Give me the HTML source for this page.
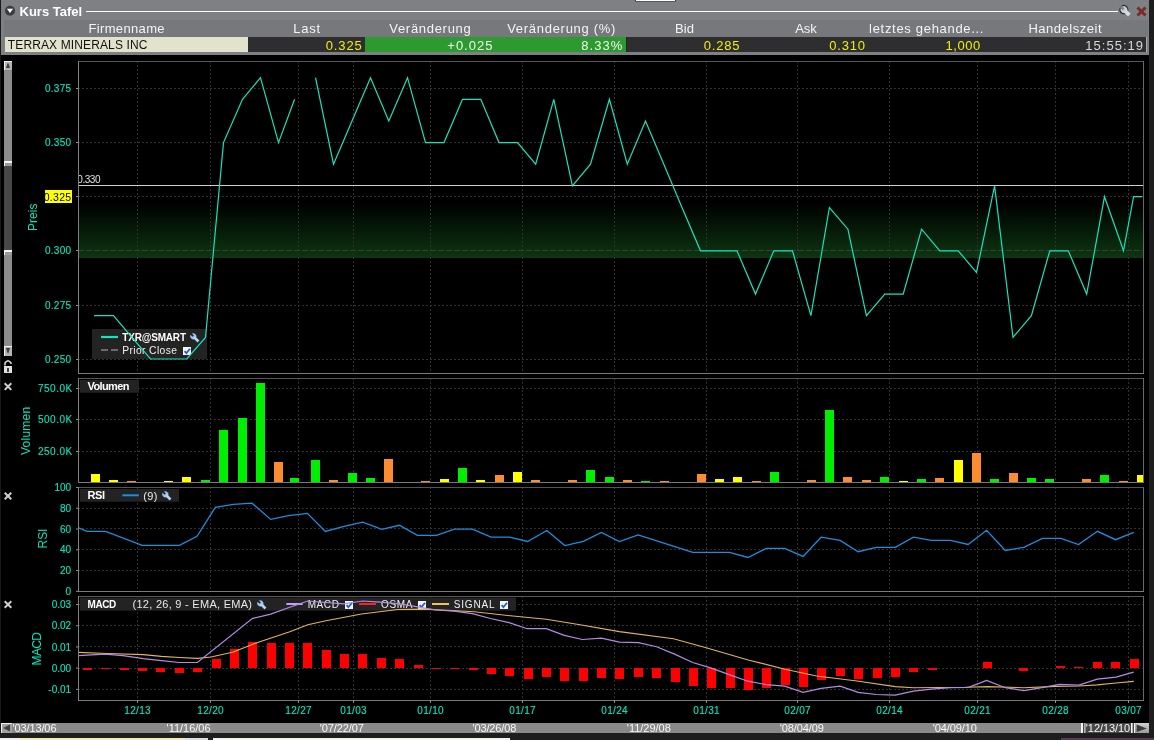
<!DOCTYPE html><html><head><meta charset="utf-8"><style>html,body{margin:0;padding:0;background:#000;overflow:hidden}svg{display:block;will-change:transform}text{font-family:'Liberation Sans', sans-serif}</style></head><body>
<svg width="1154" height="740" viewBox="0 0 1154 740">
<rect x="0" y="0" width="1154" height="740" fill="#000" />
<rect x="0" y="0" width="1154" height="55" fill="#7f8083" />
<rect x="4" y="20" width="1144" height="17" fill="#77787b" />
<rect x="0" y="0" width="1" height="740" fill="#1a1a1a" />
<rect x="1149" y="0" width="5" height="740" fill="#1e1e1e" />
<circle cx="10" cy="10.8" r="5" fill="#3c3c3e"/>
<path d="M6.9 8.8 L13.1 8.8 L10 13 Z" fill="#fff"/>
<text x="19.5" y="15.6" font-size="13" fill="#fff" font-weight="bold" text-anchor="start" textLength="62.7" lengthAdjust="spacing" >Kurs Tafel</text>
<rect x="635" y="0" width="41" height="1.6" fill="#3a3a3a" />
<rect x="636" y="0" width="39" height="1" fill="#ffffff" />
<rect x="86" y="11" width="1032" height="1" fill="#ffffff" />
<g transform="translate(1125,10.8) rotate(-45)"><circle cx="0" cy="-1.6" r="4" fill="#c6ccd4" stroke="#1e1e1e" stroke-width="1.1"/><rect x="-1.9" y="0" width="3.8" height="6.2" fill="#d6dce2"/><rect x="-1.3" y="-6.2" width="2.6" height="4" fill="#7f8083"/></g>
<path d="M1137.5 7.5 L1145.5 15.5 M1145.5 7.5 L1137.5 15.5" stroke="#7a2a2a" stroke-width="3"/>
<text x="126.5" y="32.8" font-size="13" fill="#f4f4f4" font-weight="normal" text-anchor="middle" textLength="76.2" lengthAdjust="spacing" >Firmenname</text>
<text x="306.7" y="32.8" font-size="13" fill="#f4f4f4" font-weight="normal" text-anchor="middle" textLength="26.8" lengthAdjust="spacing" >Last</text>
<text x="430" y="32.8" font-size="13" fill="#f4f4f4" font-weight="normal" text-anchor="middle" textLength="81.5" lengthAdjust="spacing" >Veränderung</text>
<text x="561.3" y="32.8" font-size="13" fill="#f4f4f4" font-weight="normal" text-anchor="middle" textLength="108.3" lengthAdjust="spacing" >Veränderung (%)</text>
<text x="684.5" y="32.8" font-size="13" fill="#f4f4f4" font-weight="normal" text-anchor="middle" textLength="18.9" lengthAdjust="spacing" >Bid</text>
<text x="806" y="32.8" font-size="13" fill="#f4f4f4" font-weight="normal" text-anchor="middle" textLength="21.7" lengthAdjust="spacing" >Ask</text>
<text x="926.3" y="32.8" font-size="13" fill="#f4f4f4" font-weight="normal" text-anchor="middle" textLength="114.4" lengthAdjust="spacing" >letztes gehande...</text>
<text x="1065" y="32.8" font-size="13" fill="#f4f4f4" font-weight="normal" text-anchor="middle" textLength="73.1" lengthAdjust="spacing" >Handelszeit</text>
<rect x="5" y="37" width="243" height="15" fill="#e3e3cd" />
<rect x="248" y="37" width="117" height="15" fill="#2e2e30" />
<rect x="365" y="37" width="261" height="15" fill="#2c9a30" />
<rect x="626" y="37" width="520" height="15" fill="#2e2e30" />
<rect x="626" y="37" width="1" height="15" fill="#242426" />
<rect x="1146" y="37" width="1" height="15" fill="#a8a8a8" />
<text x="7.8" y="49.1" font-size="12" fill="#101010" font-weight="normal" text-anchor="start" textLength="139.6" lengthAdjust="spacing" >TERRAX MINERALS INC</text>
<text x="361.7" y="50.2" font-size="13" fill="#f0f000" font-weight="normal" text-anchor="end" textLength="35.9" lengthAdjust="spacing" >0.325</text>
<text x="492.4" y="50.2" font-size="13" fill="#f2f8ec" font-weight="normal" text-anchor="end" textLength="45.1" lengthAdjust="spacing" >+0.025</text>
<text x="622.4" y="50.2" font-size="13" fill="#f2f8ec" font-weight="normal" text-anchor="end" textLength="41.1" lengthAdjust="spacing" >8.33%</text>
<text x="739.4" y="50.2" font-size="13" fill="#f0f000" font-weight="normal" text-anchor="end" textLength="35.7" lengthAdjust="spacing" >0.285</text>
<text x="865" y="50.2" font-size="13" fill="#f0f000" font-weight="normal" text-anchor="end" textLength="35.7" lengthAdjust="spacing" >0.310</text>
<text x="980.2" y="50.2" font-size="13" fill="#f0f000" font-weight="normal" text-anchor="end" textLength="34.6" lengthAdjust="spacing" >1,000</text>
<text x="1143" y="50.2" font-size="13" fill="#d8d8d8" font-weight="normal" text-anchor="end" textLength="57.7" lengthAdjust="spacing" >15:55:19</text>
<defs><linearGradient id="gb" x1="0" y1="0" x2="0" y2="1"><stop offset="0" stop-color="#0b3410" stop-opacity="0"/><stop offset="1" stop-color="#0d3611" stop-opacity="1"/></linearGradient></defs>
<rect x="78" y="203" width="1065" height="55" fill="url(#gb)" />
<line x1="137.5" y1="61" x2="137.5" y2="373" stroke="#313131" stroke-width="1" stroke-dasharray="2 2"/>
<line x1="210.5" y1="61" x2="210.5" y2="373" stroke="#313131" stroke-width="1" stroke-dasharray="2 2"/>
<line x1="298.5" y1="61" x2="298.5" y2="373" stroke="#313131" stroke-width="1" stroke-dasharray="2 2"/>
<line x1="353.5" y1="61" x2="353.5" y2="373" stroke="#313131" stroke-width="1" stroke-dasharray="2 2"/>
<line x1="430.5" y1="61" x2="430.5" y2="373" stroke="#313131" stroke-width="1" stroke-dasharray="2 2"/>
<line x1="522.5" y1="61" x2="522.5" y2="373" stroke="#313131" stroke-width="1" stroke-dasharray="2 2"/>
<line x1="614.5" y1="61" x2="614.5" y2="373" stroke="#313131" stroke-width="1" stroke-dasharray="2 2"/>
<line x1="706.5" y1="61" x2="706.5" y2="373" stroke="#313131" stroke-width="1" stroke-dasharray="2 2"/>
<line x1="797.5" y1="61" x2="797.5" y2="373" stroke="#313131" stroke-width="1" stroke-dasharray="2 2"/>
<line x1="889.5" y1="61" x2="889.5" y2="373" stroke="#313131" stroke-width="1" stroke-dasharray="2 2"/>
<line x1="977.5" y1="61" x2="977.5" y2="373" stroke="#313131" stroke-width="1" stroke-dasharray="2 2"/>
<line x1="1055.5" y1="61" x2="1055.5" y2="373" stroke="#313131" stroke-width="1" stroke-dasharray="2 2"/>
<line x1="1128.5" y1="61" x2="1128.5" y2="373" stroke="#313131" stroke-width="1" stroke-dasharray="2 2"/>
<line x1="78" y1="88.5" x2="1143" y2="88.5" stroke="#313131" stroke-width="1" stroke-dasharray="2 2"/>
<line x1="78" y1="142.5" x2="1143" y2="142.5" stroke="#313131" stroke-width="1" stroke-dasharray="2 2"/>
<line x1="78" y1="196.5" x2="1143" y2="196.5" stroke="#313131" stroke-width="1" stroke-dasharray="2 2"/>
<line x1="78" y1="250.5" x2="1143" y2="250.5" stroke="#313131" stroke-width="1" stroke-dasharray="2 2"/>
<line x1="78" y1="305.5" x2="1143" y2="305.5" stroke="#313131" stroke-width="1" stroke-dasharray="2 2"/>
<line x1="78" y1="359.5" x2="1143" y2="359.5" stroke="#313131" stroke-width="1" stroke-dasharray="2 2"/>
<line x1="78" y1="250.5" x2="1143" y2="250.5" stroke="#3c3c3c" stroke-width="1" stroke-dasharray="6 2"/>
<line x1="78" y1="185.5" x2="1143" y2="185.5" stroke="#cfcfcf" stroke-width="1" />
<clipPath id="c330"><rect x="78" y="170" width="40" height="20"/></clipPath>
<g clip-path="url(#c330)">
<text x="77.3" y="183.2" font-size="10" fill="#e0e0e0" font-weight="normal" text-anchor="start" textLength="23.2" lengthAdjust="spacing" >0.330</text>
</g>
<text x="71.1" y="92.1" font-size="10" fill="#00e8c0" font-weight="normal" text-anchor="end" textLength="26.2" lengthAdjust="spacing" stroke="#00e8c0" stroke-width="0.12" >0.375</text>
<line x1="76" y1="88.5" x2="78" y2="88.5" stroke="#909090" stroke-width="1" />
<text x="71.1" y="146.1" font-size="10" fill="#00e8c0" font-weight="normal" text-anchor="end" textLength="26.2" lengthAdjust="spacing" stroke="#00e8c0" stroke-width="0.12" >0.350</text>
<line x1="76" y1="142.5" x2="78" y2="142.5" stroke="#909090" stroke-width="1" />
<text x="71.1" y="254.1" font-size="10" fill="#00e8c0" font-weight="normal" text-anchor="end" textLength="26.2" lengthAdjust="spacing" stroke="#00e8c0" stroke-width="0.12" >0.300</text>
<line x1="76" y1="250.5" x2="78" y2="250.5" stroke="#909090" stroke-width="1" />
<text x="71.1" y="309.1" font-size="10" fill="#00e8c0" font-weight="normal" text-anchor="end" textLength="26.2" lengthAdjust="spacing" stroke="#00e8c0" stroke-width="0.12" >0.275</text>
<line x1="76" y1="305.5" x2="78" y2="305.5" stroke="#909090" stroke-width="1" />
<text x="71.1" y="363.1" font-size="10" fill="#00e8c0" font-weight="normal" text-anchor="end" textLength="26.2" lengthAdjust="spacing" stroke="#00e8c0" stroke-width="0.12" >0.250</text>
<line x1="76" y1="359.5" x2="78" y2="359.5" stroke="#909090" stroke-width="1" />
<rect x="45" y="190" width="27" height="13" fill="#ffff00" />
<text x="71.2" y="201.2" font-size="10.5" fill="#000" font-weight="normal" text-anchor="end" textLength="27.5" lengthAdjust="spacing" >0.325</text>
<line x1="76" y1="196.5" x2="78" y2="196.5" stroke="#909090" stroke-width="1" />
<text transform="translate(37.3,231) rotate(-90)" font-size="12" fill="#00e8c0" textLength="27.4" lengthAdjust="spacing">Preis</text>
<rect x="92" y="329" width="115" height="30" fill="#232323" />
<line x1="101" y1="337" x2="118" y2="337" stroke="#19e3bc" stroke-width="2.2" />
<text x="122.3" y="340.6" font-size="10" fill="#fff" font-weight="bold" text-anchor="start" textLength="63.7" lengthAdjust="spacing" >TXR@SMART</text>
<line x1="101" y1="350" x2="118" y2="350" stroke="#6a6a6a" stroke-width="2" stroke-dasharray="7 3"/>
<text x="122.3" y="353.9" font-size="10.3" fill="#f0f0f0" font-weight="normal" text-anchor="start" textLength="54.6" lengthAdjust="spacing" >Prior Close</text>
<g transform="translate(194.6,337.6) rotate(-45)"><circle cx="0" cy="-1.8" r="3" fill="#9cc4ec"/><rect x="-1.3" y="-0.5" width="2.6" height="6" fill="#b4d6f6"/><rect x="-0.95" y="-5.2" width="1.9" height="3.2" fill="#232323"/></g>
<rect x="183" y="347" width="8" height="8" fill="#f4f6fa" />
<path d="M184.6 351.2 L186.4 353.2 L190 348.8" stroke="#1d5fd0" stroke-width="1.8" fill="none"/>
<polyline points="94.1,315.7 113.5,315.7 131.9,337.4 150.5,359.0 168.8,359.0 186.8,359.0 205.5,337.4 223.5,142.6 242.5,99.3 260.5,77.7 278.5,142.6 294.6,99.3" fill="none" stroke="#19e3bc" stroke-width="1.2" stroke-linejoin="miter"/>
<polyline points="315.5,77.7 333.5,164.2 352.0,121.0 370.5,77.7 388.8,121.0 407.5,77.7 425.5,142.6 444.0,142.6 462.5,99.3 480.8,99.3 499.0,142.6 517.5,142.6 535.7,164.2 553.8,99.3 572.4,185.9 590.5,164.2 609.4,99.3 627.3,164.2 645.5,121.0 663.8,164.2 682.0,207.5 700.5,250.8 718.8,250.8 737.0,250.8 755.5,294.1 773.8,250.8 792.5,250.8 810.9,315.7 829.4,207.5 847.9,229.2 866.4,315.7 884.8,294.1 903.2,294.1 921.6,229.2 939.8,250.8 958.2,250.8 976.5,272.4 994.6,185.9 1013.0,337.4 1031.4,315.7 1049.8,250.8 1068.3,250.8 1086.7,294.1 1104.5,196.7 1123.5,250.8 1133.6,196.7 1142.3,196.7" fill="none" stroke="#19e3bc" stroke-width="1.2" stroke-linejoin="miter"/>
<rect x="78" y="61" width="1066" height="1" fill="#555555" />
<rect x="1143" y="61" width="1" height="313" fill="#686868" />
<rect x="78" y="373" width="1066" height="1" fill="#7a7a7a" />
<rect x="78" y="61" width="1" height="313" fill="#808080" />
<line x1="137.5" y1="378" x2="137.5" y2="482" stroke="#313131" stroke-width="1" stroke-dasharray="2 2"/>
<line x1="210.5" y1="378" x2="210.5" y2="482" stroke="#313131" stroke-width="1" stroke-dasharray="2 2"/>
<line x1="298.5" y1="378" x2="298.5" y2="482" stroke="#313131" stroke-width="1" stroke-dasharray="2 2"/>
<line x1="353.5" y1="378" x2="353.5" y2="482" stroke="#313131" stroke-width="1" stroke-dasharray="2 2"/>
<line x1="430.5" y1="378" x2="430.5" y2="482" stroke="#313131" stroke-width="1" stroke-dasharray="2 2"/>
<line x1="522.5" y1="378" x2="522.5" y2="482" stroke="#313131" stroke-width="1" stroke-dasharray="2 2"/>
<line x1="614.5" y1="378" x2="614.5" y2="482" stroke="#313131" stroke-width="1" stroke-dasharray="2 2"/>
<line x1="706.5" y1="378" x2="706.5" y2="482" stroke="#313131" stroke-width="1" stroke-dasharray="2 2"/>
<line x1="797.5" y1="378" x2="797.5" y2="482" stroke="#313131" stroke-width="1" stroke-dasharray="2 2"/>
<line x1="889.5" y1="378" x2="889.5" y2="482" stroke="#313131" stroke-width="1" stroke-dasharray="2 2"/>
<line x1="977.5" y1="378" x2="977.5" y2="482" stroke="#313131" stroke-width="1" stroke-dasharray="2 2"/>
<line x1="1055.5" y1="378" x2="1055.5" y2="482" stroke="#313131" stroke-width="1" stroke-dasharray="2 2"/>
<line x1="1128.5" y1="378" x2="1128.5" y2="482" stroke="#313131" stroke-width="1" stroke-dasharray="2 2"/>
<line x1="78" y1="388.5" x2="1143" y2="388.5" stroke="#313131" stroke-width="1" stroke-dasharray="2 2"/>
<line x1="78" y1="419.5" x2="1143" y2="419.5" stroke="#313131" stroke-width="1" stroke-dasharray="2 2"/>
<line x1="78" y1="451.5" x2="1143" y2="451.5" stroke="#313131" stroke-width="1" stroke-dasharray="2 2"/>
<rect x="91" y="474" width="9" height="8" fill="#ffff00" />
<rect x="109" y="480" width="9" height="2" fill="#ffff00" />
<rect x="127" y="481" width="9" height="1" fill="#fd8c30" />
<rect x="164" y="481" width="9" height="1" fill="#ffff00" />
<rect x="182" y="477" width="9" height="5" fill="#ffff00" />
<rect x="201" y="480" width="9" height="2" fill="#00ee00" />
<rect x="219" y="430" width="9" height="52" fill="#00ee00" />
<rect x="238" y="418" width="9" height="64" fill="#00ee00" />
<rect x="256" y="383" width="9" height="99" fill="#00ee00" />
<rect x="274" y="462" width="9" height="20" fill="#fd8c30" />
<rect x="290" y="478" width="9" height="4" fill="#00ee00" />
<rect x="311" y="460" width="9" height="22" fill="#00ee00" />
<rect x="329" y="480" width="9" height="2" fill="#fd8c30" />
<rect x="348" y="473" width="9" height="9" fill="#00ee00" />
<rect x="366" y="478" width="9" height="4" fill="#00ee00" />
<rect x="384" y="459" width="9" height="23" fill="#fd8c30" />
<rect x="421" y="481" width="9" height="1" fill="#fd8c30" />
<rect x="440" y="479" width="9" height="3" fill="#ffff00" />
<rect x="458" y="468" width="9" height="14" fill="#00ee00" />
<rect x="476" y="480" width="9" height="2" fill="#ffff00" />
<rect x="495" y="475" width="9" height="7" fill="#fd8c30" />
<rect x="513" y="472" width="9" height="10" fill="#ffff00" />
<rect x="531" y="480" width="9" height="2" fill="#fd8c30" />
<rect x="568" y="480" width="9" height="2" fill="#fd8c30" />
<rect x="586" y="470" width="9" height="12" fill="#00ee00" />
<rect x="605" y="477" width="9" height="5" fill="#00ee00" />
<rect x="623" y="480" width="9" height="2" fill="#fd8c30" />
<rect x="641" y="481" width="9" height="1" fill="#00ee00" />
<rect x="660" y="481" width="9" height="1" fill="#fd8c30" />
<rect x="697" y="474" width="9" height="8" fill="#fd8c30" />
<rect x="715" y="479" width="9" height="3" fill="#ffff00" />
<rect x="733" y="477" width="9" height="5" fill="#ffff00" />
<rect x="752" y="481" width="9" height="1" fill="#fd8c30" />
<rect x="770" y="472" width="9" height="10" fill="#00ee00" />
<rect x="807" y="480" width="9" height="2" fill="#fd8c30" />
<rect x="825" y="410" width="9" height="72" fill="#00ee00" />
<rect x="843" y="477" width="9" height="5" fill="#fd8c30" />
<rect x="862" y="480" width="9" height="2" fill="#fd8c30" />
<rect x="880" y="477" width="9" height="5" fill="#00ee00" />
<rect x="899" y="481" width="9" height="1" fill="#ffff00" />
<rect x="917" y="479" width="9" height="3" fill="#00ee00" />
<rect x="935" y="478" width="9" height="4" fill="#fd8c30" />
<rect x="954" y="460" width="9" height="22" fill="#ffff00" />
<rect x="972" y="453" width="9" height="29" fill="#fd8c30" />
<rect x="990" y="479" width="9" height="3" fill="#00ee00" />
<rect x="1009" y="473" width="9" height="9" fill="#fd8c30" />
<rect x="1027" y="478" width="9" height="4" fill="#00ee00" />
<rect x="1045" y="479" width="9" height="3" fill="#00ee00" />
<rect x="1082" y="479" width="9" height="3" fill="#fd8c30" />
<rect x="1100" y="475" width="9" height="7" fill="#00ee00" />
<rect x="1119" y="481" width="9" height="1" fill="#fd8c30" />
<rect x="1137" y="475" width="6" height="7" fill="#ffff00" />
<rect x="78" y="378" width="1066" height="1" fill="#555555" />
<rect x="1143" y="378" width="1" height="105" fill="#686868" />
<rect x="78" y="482" width="1066" height="1" fill="#7a7a7a" />
<rect x="78" y="378" width="1" height="105" fill="#808080" />
<rect x="80" y="380" width="59" height="12.7" fill="#232323" />
<text x="87.5" y="390.2" font-size="11" fill="#fff" font-weight="bold" text-anchor="start" textLength="42" lengthAdjust="spacing" >Volumen</text>
<text x="72.2" y="392.1" font-size="10" fill="#00e8c0" font-weight="normal" text-anchor="end" textLength="34.2" lengthAdjust="spacing" stroke="#00e8c0" stroke-width="0.12" >750.0K</text>
<line x1="76" y1="388.5" x2="78" y2="388.5" stroke="#909090" stroke-width="1" />
<text x="72.2" y="423.1" font-size="10" fill="#00e8c0" font-weight="normal" text-anchor="end" textLength="34.2" lengthAdjust="spacing" stroke="#00e8c0" stroke-width="0.12" >500.0K</text>
<line x1="76" y1="419.5" x2="78" y2="419.5" stroke="#909090" stroke-width="1" />
<text x="72.2" y="455.1" font-size="10" fill="#00e8c0" font-weight="normal" text-anchor="end" textLength="34.2" lengthAdjust="spacing" stroke="#00e8c0" stroke-width="0.12" >250.0K</text>
<line x1="76" y1="451.5" x2="78" y2="451.5" stroke="#909090" stroke-width="1" />
<text transform="translate(30.3,455) rotate(-90)" font-size="12" fill="#00e8c0" textLength="48.2" lengthAdjust="spacing">Volumen</text>
<line x1="137.5" y1="487" x2="137.5" y2="591" stroke="#313131" stroke-width="1" stroke-dasharray="2 2"/>
<line x1="210.5" y1="487" x2="210.5" y2="591" stroke="#313131" stroke-width="1" stroke-dasharray="2 2"/>
<line x1="298.5" y1="487" x2="298.5" y2="591" stroke="#313131" stroke-width="1" stroke-dasharray="2 2"/>
<line x1="353.5" y1="487" x2="353.5" y2="591" stroke="#313131" stroke-width="1" stroke-dasharray="2 2"/>
<line x1="430.5" y1="487" x2="430.5" y2="591" stroke="#313131" stroke-width="1" stroke-dasharray="2 2"/>
<line x1="522.5" y1="487" x2="522.5" y2="591" stroke="#313131" stroke-width="1" stroke-dasharray="2 2"/>
<line x1="614.5" y1="487" x2="614.5" y2="591" stroke="#313131" stroke-width="1" stroke-dasharray="2 2"/>
<line x1="706.5" y1="487" x2="706.5" y2="591" stroke="#313131" stroke-width="1" stroke-dasharray="2 2"/>
<line x1="797.5" y1="487" x2="797.5" y2="591" stroke="#313131" stroke-width="1" stroke-dasharray="2 2"/>
<line x1="889.5" y1="487" x2="889.5" y2="591" stroke="#313131" stroke-width="1" stroke-dasharray="2 2"/>
<line x1="977.5" y1="487" x2="977.5" y2="591" stroke="#313131" stroke-width="1" stroke-dasharray="2 2"/>
<line x1="1055.5" y1="487" x2="1055.5" y2="591" stroke="#313131" stroke-width="1" stroke-dasharray="2 2"/>
<line x1="1128.5" y1="487" x2="1128.5" y2="591" stroke="#313131" stroke-width="1" stroke-dasharray="2 2"/>
<line x1="78" y1="508.5" x2="1143" y2="508.5" stroke="#313131" stroke-width="1" stroke-dasharray="2 2"/>
<line x1="78" y1="528.5" x2="1143" y2="528.5" stroke="#313131" stroke-width="1" stroke-dasharray="2 2"/>
<line x1="78" y1="549.5" x2="1143" y2="549.5" stroke="#313131" stroke-width="1" stroke-dasharray="2 2"/>
<line x1="78" y1="570.5" x2="1143" y2="570.5" stroke="#313131" stroke-width="1" stroke-dasharray="2 2"/>
<rect x="80" y="489" width="99" height="12.7" fill="#232323" />
<text x="87.5" y="499.2" font-size="11" fill="#fff" font-weight="bold" text-anchor="start" textLength="17.5" lengthAdjust="spacing" >RSI</text>
<line x1="122.4" y1="495.3" x2="138.8" y2="495.3" stroke="#1a8fe0" stroke-width="2" />
<text x="143.3" y="499.5" font-size="11" fill="#e8e8e8" font-weight="normal" text-anchor="start" textLength="14" lengthAdjust="spacing" >(9)</text>
<g transform="translate(166.6,495.6) rotate(-45)"><circle cx="0" cy="-1.8" r="3" fill="#9cc4ec"/><rect x="-1.3" y="-0.5" width="2.6" height="6" fill="#b4d6f6"/><rect x="-0.95" y="-5.2" width="1.9" height="3.2" fill="#232323"/></g>
<clipPath id="rc"><rect x="78" y="487" width="1065" height="104"/></clipPath>
<g clip-path="url(#rc)">
<polyline points="78.0,527.6 87.0,531.4 105.5,531.4 142.2,545.4 179.4,545.4 197.0,536.3 215.4,507.3 233.5,504.4 252.0,503.2 270.7,519.4 288.7,515.6 307.4,513.4 325.4,531.4 344.0,526.4 362.7,522.2 381.8,529.4 399.4,525.3 417.4,535.4 436.4,535.4 454.4,529.1 472.4,529.1 491.1,537.2 509.6,537.2 527.6,541.5 546.8,530.5 564.8,545.6 583.3,541.3 601.4,532.5 619.4,541.5 638.1,535.0 692.7,552.3 729.4,552.3 747.9,557.5 766.3,548.3 784.6,548.3 803.1,556.4 821.1,537.2 840.1,540.4 858.2,551.7 876.2,547.4 895.3,547.4 913.4,537.2 931.4,540.4 950.5,540.4 968.1,544.5 986.6,530.3 1005.3,550.5 1023.8,547.4 1042.4,538.3 1060.9,538.3 1078.5,544.6 1097.5,531.3 1115.5,539.7 1133.8,532.3" fill="none" stroke="#1a8fe0" stroke-width="1.3" stroke-linejoin="miter"/>
</g>
<rect x="78" y="487" width="1066" height="1" fill="#555555" />
<rect x="1143" y="487" width="1" height="105" fill="#686868" />
<rect x="78" y="591" width="1066" height="1" fill="#7a7a7a" />
<rect x="78" y="487" width="1" height="105" fill="#808080" />
<text x="71.1" y="491.1" font-size="10" fill="#00e8c0" font-weight="normal" text-anchor="end" stroke="#00e8c0" stroke-width="0.12" >100</text>
<line x1="76" y1="487.5" x2="78" y2="487.5" stroke="#909090" stroke-width="1" />
<text x="71.1" y="511.86" font-size="10" fill="#00e8c0" font-weight="normal" text-anchor="end" stroke="#00e8c0" stroke-width="0.12" >80</text>
<line x1="76" y1="508.26" x2="78" y2="508.26" stroke="#909090" stroke-width="1" />
<text x="71.1" y="532.62" font-size="10" fill="#00e8c0" font-weight="normal" text-anchor="end" stroke="#00e8c0" stroke-width="0.12" >60</text>
<line x1="76" y1="529.02" x2="78" y2="529.02" stroke="#909090" stroke-width="1" />
<text x="71.1" y="553.38" font-size="10" fill="#00e8c0" font-weight="normal" text-anchor="end" stroke="#00e8c0" stroke-width="0.12" >40</text>
<line x1="76" y1="549.78" x2="78" y2="549.78" stroke="#909090" stroke-width="1" />
<text x="71.1" y="574.14" font-size="10" fill="#00e8c0" font-weight="normal" text-anchor="end" stroke="#00e8c0" stroke-width="0.12" >20</text>
<line x1="76" y1="570.54" x2="78" y2="570.54" stroke="#909090" stroke-width="1" />
<text x="71.1" y="594.9" font-size="10" fill="#00e8c0" font-weight="normal" text-anchor="end" stroke="#00e8c0" stroke-width="0.12" >0</text>
<line x1="76" y1="591.3" x2="78" y2="591.3" stroke="#909090" stroke-width="1" />
<text transform="translate(46.5,548.4) rotate(-90)" font-size="12" fill="#00e8c0" textLength="19.8" lengthAdjust="spacing">RSI</text>
<line x1="137.5" y1="596" x2="137.5" y2="700" stroke="#313131" stroke-width="1" stroke-dasharray="2 2"/>
<line x1="210.5" y1="596" x2="210.5" y2="700" stroke="#313131" stroke-width="1" stroke-dasharray="2 2"/>
<line x1="298.5" y1="596" x2="298.5" y2="700" stroke="#313131" stroke-width="1" stroke-dasharray="2 2"/>
<line x1="353.5" y1="596" x2="353.5" y2="700" stroke="#313131" stroke-width="1" stroke-dasharray="2 2"/>
<line x1="430.5" y1="596" x2="430.5" y2="700" stroke="#313131" stroke-width="1" stroke-dasharray="2 2"/>
<line x1="522.5" y1="596" x2="522.5" y2="700" stroke="#313131" stroke-width="1" stroke-dasharray="2 2"/>
<line x1="614.5" y1="596" x2="614.5" y2="700" stroke="#313131" stroke-width="1" stroke-dasharray="2 2"/>
<line x1="706.5" y1="596" x2="706.5" y2="700" stroke="#313131" stroke-width="1" stroke-dasharray="2 2"/>
<line x1="797.5" y1="596" x2="797.5" y2="700" stroke="#313131" stroke-width="1" stroke-dasharray="2 2"/>
<line x1="889.5" y1="596" x2="889.5" y2="700" stroke="#313131" stroke-width="1" stroke-dasharray="2 2"/>
<line x1="977.5" y1="596" x2="977.5" y2="700" stroke="#313131" stroke-width="1" stroke-dasharray="2 2"/>
<line x1="1055.5" y1="596" x2="1055.5" y2="700" stroke="#313131" stroke-width="1" stroke-dasharray="2 2"/>
<line x1="1128.5" y1="596" x2="1128.5" y2="700" stroke="#313131" stroke-width="1" stroke-dasharray="2 2"/>
<line x1="78" y1="604.5" x2="1143" y2="604.5" stroke="#313131" stroke-width="1" stroke-dasharray="2 2"/>
<line x1="78" y1="625.5" x2="1143" y2="625.5" stroke="#313131" stroke-width="1" stroke-dasharray="2 2"/>
<line x1="78" y1="646.5" x2="1143" y2="646.5" stroke="#313131" stroke-width="1" stroke-dasharray="2 2"/>
<line x1="78" y1="668.5" x2="1143" y2="668.5" stroke="#313131" stroke-width="1" stroke-dasharray="2 2"/>
<line x1="78" y1="689.5" x2="1143" y2="689.5" stroke="#313131" stroke-width="1" stroke-dasharray="2 2"/>
<rect x="83" y="668" width="9" height="2" fill="#ff0000" />
<rect x="101" y="668" width="9" height="1" fill="#ff0000" />
<rect x="120" y="668" width="9" height="2" fill="#ff0000" />
<rect x="138" y="668" width="9" height="3" fill="#ff0000" />
<rect x="156" y="668" width="9" height="4" fill="#ff0000" />
<rect x="175" y="668" width="9" height="5" fill="#ff0000" />
<rect x="193" y="668" width="9" height="4" fill="#ff0000" />
<rect x="212" y="659" width="9" height="9" fill="#ff0000" />
<rect x="230" y="649" width="9" height="19" fill="#ff0000" />
<rect x="248" y="642" width="9" height="26" fill="#ff0000" />
<rect x="267" y="643" width="9" height="25" fill="#ff0000" />
<rect x="285" y="643" width="9" height="25" fill="#ff0000" />
<rect x="303" y="643" width="9" height="25" fill="#ff0000" />
<rect x="322" y="650" width="9" height="18" fill="#ff0000" />
<rect x="340" y="654" width="9" height="14" fill="#ff0000" />
<rect x="358" y="654" width="9" height="14" fill="#ff0000" />
<rect x="377" y="658" width="9" height="10" fill="#ff0000" />
<rect x="395" y="659" width="9" height="9" fill="#ff0000" />
<rect x="414" y="665" width="9" height="3" fill="#ff0000" />
<rect x="432" y="668" width="9" height="1" fill="#ff0000" />
<rect x="450" y="668" width="9" height="1" fill="#ff0000" />
<rect x="469" y="668" width="9" height="2" fill="#ff0000" />
<rect x="487" y="668" width="9" height="6" fill="#ff0000" />
<rect x="505" y="668" width="9" height="8" fill="#ff0000" />
<rect x="524" y="668" width="9" height="11" fill="#ff0000" />
<rect x="542" y="668" width="9" height="9" fill="#ff0000" />
<rect x="560" y="668" width="9" height="13" fill="#ff0000" />
<rect x="579" y="668" width="9" height="13" fill="#ff0000" />
<rect x="597" y="668" width="9" height="10" fill="#ff0000" />
<rect x="615" y="668" width="9" height="11" fill="#ff0000" />
<rect x="634" y="668" width="9" height="9" fill="#ff0000" />
<rect x="652" y="668" width="9" height="10" fill="#ff0000" />
<rect x="671" y="668" width="9" height="14" fill="#ff0000" />
<rect x="689" y="668" width="9" height="18" fill="#ff0000" />
<rect x="707" y="668" width="9" height="20" fill="#ff0000" />
<rect x="726" y="668" width="9" height="20" fill="#ff0000" />
<rect x="744" y="668" width="9" height="22" fill="#ff0000" />
<rect x="762" y="668" width="9" height="20" fill="#ff0000" />
<rect x="781" y="668" width="9" height="17" fill="#ff0000" />
<rect x="799" y="668" width="9" height="19" fill="#ff0000" />
<rect x="817" y="668" width="9" height="12" fill="#ff0000" />
<rect x="836" y="668" width="9" height="8" fill="#ff0000" />
<rect x="854" y="668" width="9" height="11" fill="#ff0000" />
<rect x="873" y="668" width="9" height="10" fill="#ff0000" />
<rect x="891" y="668" width="9" height="9" fill="#ff0000" />
<rect x="909" y="668" width="9" height="4" fill="#ff0000" />
<rect x="928" y="668" width="9" height="2" fill="#ff0000" />
<rect x="983" y="662" width="9" height="6" fill="#ff0000" />
<rect x="1019" y="668" width="9" height="3" fill="#ff0000" />
<rect x="1056" y="666" width="9" height="2" fill="#ff0000" />
<rect x="1074" y="667" width="9" height="1" fill="#ff0000" />
<rect x="1093" y="662" width="9" height="6" fill="#ff0000" />
<rect x="1111" y="662" width="9" height="6" fill="#ff0000" />
<rect x="1130" y="659" width="9" height="9" fill="#ff0000" />
<rect x="80" y="597.5" width="436" height="13.2" fill="#232323"/>
<text x="87.5" y="608" font-size="10" fill="#fff" font-weight="bold" text-anchor="start" textLength="28.8" lengthAdjust="spacing" >MACD</text>
<text x="132.5" y="608.3" font-size="11" fill="#e8e8e8" font-weight="normal" text-anchor="start" textLength="119.5" lengthAdjust="spacing" >(12, 26, 9 - EMA, EMA)</text>
<g transform="translate(261.6,604.6) rotate(-45)"><circle cx="0" cy="-1.8" r="3" fill="#9cc4ec"/><rect x="-1.3" y="-0.5" width="2.6" height="6" fill="#b4d6f6"/><rect x="-0.95" y="-5.2" width="1.9" height="3.2" fill="#232323"/></g>
<line x1="286.3" y1="604" x2="302.7" y2="604" stroke="#c8a0f0" stroke-width="2" />
<text x="307.7" y="607.8" font-size="10" fill="#f0f0f0" font-weight="normal" text-anchor="start" textLength="31.2" lengthAdjust="spacing" >MACD</text>
<rect x="345" y="601" width="8" height="8" fill="#f4f6fa" />
<path d="M346.6 605.2 L348.4 607.2 L352 602.8" stroke="#1d5fd0" stroke-width="1.8" fill="none"/>
<line x1="359" y1="604" x2="376" y2="604" stroke="#ff2020" stroke-width="2" />
<text x="381" y="607.8" font-size="10" fill="#f0f0f0" font-weight="normal" text-anchor="start" textLength="31.4" lengthAdjust="spacing" >OSMA</text>
<rect x="418" y="601" width="8" height="8" fill="#f4f6fa" />
<path d="M419.6 605.2 L421.4 607.2 L425 602.8" stroke="#1d5fd0" stroke-width="1.8" fill="none"/>
<line x1="432" y1="604" x2="449" y2="604" stroke="#f0c060" stroke-width="2" />
<text x="453.7" y="607.8" font-size="10" fill="#f0f0f0" font-weight="normal" text-anchor="start" textLength="40.9" lengthAdjust="spacing" >SIGNAL</text>
<rect x="500" y="601" width="8" height="8" fill="#f4f6fa" />
<path d="M501.6 605.2 L503.4 607.2 L507 602.8" stroke="#1d5fd0" stroke-width="1.8" fill="none"/>
<clipPath id="mc"><rect x="78" y="596" width="1065" height="104"/></clipPath>
<g clip-path="url(#mc)">
<polyline points="78.0,652.3 107.3,653.5 143.3,654.6 161.4,656.4 179.4,657.5 197.4,658.4 211.0,657.0 233.4,652.0 254.7,643.5 271.8,637.8 289.8,631.7 307.8,624.8 325.9,620.8 361.5,614.0 397.6,609.5 424.6,609.1 474.2,611.8 510.3,615.8 546.3,619.2 580.0,624.8 619.4,631.6 673.5,638.8 706.2,647.8 749.0,660.2 785.0,669.2 816.6,676.0 857.0,681.0 895.3,686.6 913.4,687.7 965.2,687.3 987.7,686.6 1023.8,687.7 1055.8,686.4 1078.9,686.0 1097.2,684.9 1116.0,683.0 1133.7,681.4" fill="none" stroke="#e0b458" stroke-width="1.15" stroke-linejoin="miter"/>
<polyline points="78.0,655.7 105.0,654.1 123.0,655.7 143.3,658.6 161.4,660.7 179.4,662.5 197.4,662.5 252.6,618.4 270.7,614.1 289.8,607.3 307.8,601.0 343.5,603.9 362.7,601.0 380.7,602.1 399.9,603.9 417.9,606.8 435.9,610.0 453.9,611.1 472.4,613.6 490.4,618.5 509.1,622.6 527.2,628.7 546.3,628.7 564.3,635.4 582.4,639.5 601.4,638.1 619.4,642.2 638.6,642.6 656.6,646.7 674.6,654.1 692.7,662.5 711.4,668.1 729.8,674.9 747.9,681.2 765.9,684.6 784.6,686.1 803.1,692.4 821.1,688.4 840.1,686.1 858.2,692.4 876.2,694.5 895.3,695.1 913.4,691.1 931.4,689.1 950.5,687.7 968.6,687.3 986.6,680.5 1005.3,687.7 1023.8,690.6 1041.8,687.7 1059.8,684.3 1078.9,685.1 1097.2,679.2 1116.0,677.1 1133.7,672.2" fill="none" stroke="#b48ae6" stroke-width="1.2" stroke-linejoin="miter"/>
</g>
<rect x="78" y="596" width="1066" height="1" fill="#555555" />
<rect x="1143" y="596" width="1" height="105" fill="#686868" />
<rect x="78" y="700" width="1066" height="1" fill="#7a7a7a" />
<rect x="78" y="596" width="1" height="105" fill="#808080" />
<text x="71.1" y="608.1" font-size="10" fill="#00e8c0" font-weight="normal" text-anchor="end" stroke="#00e8c0" stroke-width="0.12" >0.03</text>
<line x1="76" y1="604.5" x2="78" y2="604.5" stroke="#909090" stroke-width="1" />
<text x="71.1" y="629.325" font-size="10" fill="#00e8c0" font-weight="normal" text-anchor="end" stroke="#00e8c0" stroke-width="0.12" >0.02</text>
<line x1="76" y1="625.725" x2="78" y2="625.725" stroke="#909090" stroke-width="1" />
<text x="71.1" y="650.5500000000001" font-size="10" fill="#00e8c0" font-weight="normal" text-anchor="end" stroke="#00e8c0" stroke-width="0.12" >0.01</text>
<line x1="76" y1="646.95" x2="78" y2="646.95" stroke="#909090" stroke-width="1" />
<text x="71.1" y="671.775" font-size="10" fill="#00e8c0" font-weight="normal" text-anchor="end" stroke="#00e8c0" stroke-width="0.12" >0.00</text>
<line x1="76" y1="668.175" x2="78" y2="668.175" stroke="#909090" stroke-width="1" />
<text x="71.1" y="693.0" font-size="10" fill="#00e8c0" font-weight="normal" text-anchor="end" stroke="#00e8c0" stroke-width="0.12" >-0.01</text>
<line x1="76" y1="689.4" x2="78" y2="689.4" stroke="#909090" stroke-width="1" />
<text transform="translate(40.7,665.4) rotate(-90)" font-size="12" fill="#00e8c0" textLength="33.4" lengthAdjust="spacing">MACD</text>
<line x1="137.5" y1="700" x2="137.5" y2="703" stroke="#909090" stroke-width="1" />
<text x="137.5" y="713.6" font-size="10" fill="#00e8c0" font-weight="normal" text-anchor="middle" textLength="26.3" lengthAdjust="spacing" stroke="#00e8c0" stroke-width="0.12" >12/13</text>
<line x1="210.5" y1="700" x2="210.5" y2="703" stroke="#909090" stroke-width="1" />
<text x="210.5" y="713.6" font-size="10" fill="#00e8c0" font-weight="normal" text-anchor="middle" textLength="26.3" lengthAdjust="spacing" stroke="#00e8c0" stroke-width="0.12" >12/20</text>
<line x1="298.5" y1="700" x2="298.5" y2="703" stroke="#909090" stroke-width="1" />
<text x="298.5" y="713.6" font-size="10" fill="#00e8c0" font-weight="normal" text-anchor="middle" textLength="26.3" lengthAdjust="spacing" stroke="#00e8c0" stroke-width="0.12" >12/27</text>
<line x1="353.5" y1="700" x2="353.5" y2="703" stroke="#909090" stroke-width="1" />
<text x="353.5" y="713.6" font-size="10" fill="#00e8c0" font-weight="normal" text-anchor="middle" textLength="26.3" lengthAdjust="spacing" stroke="#00e8c0" stroke-width="0.12" >01/03</text>
<line x1="430.5" y1="700" x2="430.5" y2="703" stroke="#909090" stroke-width="1" />
<text x="430.5" y="713.6" font-size="10" fill="#00e8c0" font-weight="normal" text-anchor="middle" textLength="26.3" lengthAdjust="spacing" stroke="#00e8c0" stroke-width="0.12" >01/10</text>
<line x1="522.5" y1="700" x2="522.5" y2="703" stroke="#909090" stroke-width="1" />
<text x="522.5" y="713.6" font-size="10" fill="#00e8c0" font-weight="normal" text-anchor="middle" textLength="26.3" lengthAdjust="spacing" stroke="#00e8c0" stroke-width="0.12" >01/17</text>
<line x1="614.5" y1="700" x2="614.5" y2="703" stroke="#909090" stroke-width="1" />
<text x="614.5" y="713.6" font-size="10" fill="#00e8c0" font-weight="normal" text-anchor="middle" textLength="26.3" lengthAdjust="spacing" stroke="#00e8c0" stroke-width="0.12" >01/24</text>
<line x1="706.5" y1="700" x2="706.5" y2="703" stroke="#909090" stroke-width="1" />
<text x="706.5" y="713.6" font-size="10" fill="#00e8c0" font-weight="normal" text-anchor="middle" textLength="26.3" lengthAdjust="spacing" stroke="#00e8c0" stroke-width="0.12" >01/31</text>
<line x1="797.5" y1="700" x2="797.5" y2="703" stroke="#909090" stroke-width="1" />
<text x="797.5" y="713.6" font-size="10" fill="#00e8c0" font-weight="normal" text-anchor="middle" textLength="26.3" lengthAdjust="spacing" stroke="#00e8c0" stroke-width="0.12" >02/07</text>
<line x1="889.5" y1="700" x2="889.5" y2="703" stroke="#909090" stroke-width="1" />
<text x="889.5" y="713.6" font-size="10" fill="#00e8c0" font-weight="normal" text-anchor="middle" textLength="26.3" lengthAdjust="spacing" stroke="#00e8c0" stroke-width="0.12" >02/14</text>
<line x1="977.5" y1="700" x2="977.5" y2="703" stroke="#909090" stroke-width="1" />
<text x="977.5" y="713.6" font-size="10" fill="#00e8c0" font-weight="normal" text-anchor="middle" textLength="26.3" lengthAdjust="spacing" stroke="#00e8c0" stroke-width="0.12" >02/21</text>
<line x1="1055.5" y1="700" x2="1055.5" y2="703" stroke="#909090" stroke-width="1" />
<text x="1055.5" y="713.6" font-size="10" fill="#00e8c0" font-weight="normal" text-anchor="middle" textLength="26.3" lengthAdjust="spacing" stroke="#00e8c0" stroke-width="0.12" >02/28</text>
<line x1="1128.5" y1="700" x2="1128.5" y2="703" stroke="#909090" stroke-width="1" />
<text x="1128.5" y="713.6" font-size="10" fill="#00e8c0" font-weight="normal" text-anchor="middle" textLength="26.3" lengthAdjust="spacing" stroke="#00e8c0" stroke-width="0.12" >03/07</text>
<rect x="4" y="61" width="8" height="295" fill="#8c8c8c" />
<rect x="4" y="61" width="8" height="9" fill="#b4b4b4" />
<rect x="4" y="61" width="8" height="1" fill="#f0f0f0" />
<rect x="4" y="61" width="1" height="9" fill="#f0f0f0" />
<path d="M6 68 L10 68 L8.5 63.5 L7.5 63.5 Z" fill="#404040"/>
<rect x="4" y="161" width="8" height="5" fill="#f4f4f4" />
<rect x="5" y="163" width="7" height="3" fill="#9a9a9a" />
<rect x="4" y="166" width="8" height="85" fill="#484848" />
<rect x="4" y="250" width="8" height="5" fill="#f4f4f4" />
<rect x="5" y="252" width="7" height="3" fill="#9a9a9a" />
<rect x="4" y="346" width="8" height="10" fill="#b4b4b4" />
<rect x="4" y="346" width="8" height="1" fill="#f0f0f0" />
<rect x="4" y="346" width="1" height="10" fill="#f0f0f0" />
<path d="M6 348 L10 348 L8.5 353 L7.5 353 Z" fill="#404040"/>
<path d="M5 365.5 L5 363 Q8 358.5 11 363 L11 364" stroke="#e0e0e0" stroke-width="1.5" fill="none"/>
<rect x="4" y="366" width="8" height="7" fill="#e0e0e0" />
<rect x="7" y="368" width="2" height="4" fill="#404040" />
<path d="M4.7 383.3 L11.3 389.90000000000003 M11.3 383.3 L4.7 389.90000000000003" stroke="#d0d0d0" stroke-width="2"/>
<path d="M4.7 492.7 L11.3 499.3 M11.3 492.7 L4.7 499.3" stroke="#d0d0d0" stroke-width="2"/>
<path d="M4.7 601.2 L11.3 607.8 M11.3 601.2 L4.7 607.8" stroke="#d0d0d0" stroke-width="2"/>
<rect x="1" y="723" width="1148" height="10" fill="#8a8a8a" />
<rect x="1" y="723" width="11" height="10" fill="#a0a0a0" />
<rect x="1" y="723" width="11" height="1" fill="#f0f0f0" />
<rect x="1" y="723" width="1" height="10" fill="#f0f0f0" />
<path d="M3 728 L10 724.5 L10 731.5 Z" fill="#404040"/>
<text x="12.5" y="732.2" font-size="11" fill="#f8f8f8" font-weight="normal" text-anchor="start" textLength="44" lengthAdjust="spacing" >'03/13/06</text>
<text x="166.6" y="732.2" font-size="11" fill="#f8f8f8" font-weight="normal" text-anchor="start" textLength="44" lengthAdjust="spacing" >'11/16/06</text>
<text x="319.8" y="732.2" font-size="11" fill="#f8f8f8" font-weight="normal" text-anchor="start" textLength="44" lengthAdjust="spacing" >'07/22/07</text>
<text x="472.4" y="732.2" font-size="11" fill="#f8f8f8" font-weight="normal" text-anchor="start" textLength="44" lengthAdjust="spacing" >'03/26/08</text>
<text x="626.8" y="732.2" font-size="11" fill="#f8f8f8" font-weight="normal" text-anchor="start" textLength="44" lengthAdjust="spacing" >'11/29/08</text>
<text x="779.8" y="732.2" font-size="11" fill="#f8f8f8" font-weight="normal" text-anchor="start" textLength="44" lengthAdjust="spacing" >'08/04/09</text>
<text x="932.8" y="732.2" font-size="11" fill="#f8f8f8" font-weight="normal" text-anchor="start" textLength="44" lengthAdjust="spacing" >'04/09/10</text>
<rect x="1081" y="723" width="55" height="10" fill="#484848" />
<rect x="1081" y="723" width="2" height="10" fill="#f4f4f4" />
<rect x="1084.4" y="723" width="1" height="10" fill="#f4f4f4" />
<rect x="1131" y="723" width="1.6" height="10" fill="#f4f4f4" />
<rect x="1134" y="723" width="1.4" height="10" fill="#f4f4f4" />
<text x="1085.8" y="732.2" font-size="11" fill="#f8f8f8" font-weight="normal" text-anchor="start" textLength="44.4" lengthAdjust="spacing" >'12/13/10</text>
<defs><linearGradient id="bt" x1="0" y1="0" x2="0" y2="1"><stop offset="0" stop-color="#d0d0d0"/><stop offset="1" stop-color="#9c9c9c"/></linearGradient></defs>
<rect x="1135.4" y="723" width="13.6" height="10" fill="url(#bt)" />
<path d="M1136.6 724.6 L1146.8 728.4 L1136.6 732 Z" fill="#3a3a3a"/>
<rect x="1" y="733" width="1148" height="5" fill="#1e1e1e" />
<rect x="0" y="738" width="19" height="2" fill="#f0f0f0" />
<rect x="19" y="738" width="166" height="2" fill="#f2eeb0" />
<rect x="185" y="738" width="23" height="2" fill="#e0e0d8" />
<rect x="208" y="738" width="5" height="2" fill="#202020" />
<rect x="213" y="738" width="297" height="2" fill="#f4f4f0" />
<rect x="510" y="738" width="551" height="2" fill="#1e1e1e" />
<rect x="1061" y="738" width="93" height="2" fill="#5a3c52" />
</svg></body></html>
